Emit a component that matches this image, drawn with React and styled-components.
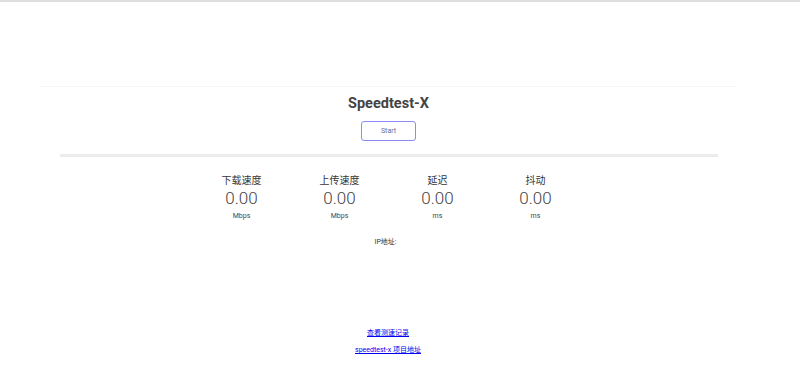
import styled, { createGlobalStyle } from "styled-components"

const Global = createGlobalStyle`
html, body {
margin: 0;
padding: 0;
background: #fff;
font-family: Roboto, "Noto Sans CJK SC", sans-serif;
}
`

const stats = [
  { label: "下载速度", value: "0.00", unit: "Mbps" },
  { label: "上传速度", value: "0.00", unit: "Mbps" },
  { label: "延迟", value: "0.00", unit: "ms" },
  { label: "抖动", value: "0.00", unit: "ms" },
]

export default function App() {
  return (
    <>
      <Global />
      <TopBar />
      <Pagina>
        <Painel>
          <Titulo>Speedtest-X</Titulo>
          <BotaoStart>Start</BotaoStart>
          <Divisor />
          <ListaStats>
            {stats.map((s) => (
              <Stat key={s.label}>
                <StatLabel>{s.label}</StatLabel>
                <StatValor>{s.value}</StatValor>
                <StatUnidade>{s.unit}</StatUnidade>
              </Stat>
            ))}
          </ListaStats>
          <Ip>IP地址:</Ip>
        </Painel>
        <Links>
          <a href="#">查看测速记录</a>
          <a href="#">speedtest-x 项目地址</a>
        </Links>
      </Pagina>
    </>
  )
}

const TopBar = styled.div`
height: 2px;
background-color: #dedede;
`

const Pagina = styled.div`
width: 776px;
display: flex;
flex-direction: column;
align-items: center;
padding-top: 84px;
`

const Painel = styled.div`
box-sizing: border-box;
width: 697px;
margin-left: 1px;
border-top: 1px solid #f6f6f6;
display: flex;
flex-direction: column;
align-items: center;
padding-top: 8px;
`

const Titulo = styled.div`
font-family: Roboto, sans-serif;
font-weight: 700;
font-size: 14.5px;
line-height: 18px;
color: #444;
`

const BotaoStart = styled.button`
width: 55px;
height: 20px;
margin-top: 8px;
border: 1px solid #8b8bf5;
border-radius: 3px;
background: #fff;
font-family: Roboto, sans-serif;
font-size: 7px;
color: #6b6b8f;
padding: 0;
`

const Divisor = styled.div`
width: 658px;
height: 3px;
margin-top: 13px;
background-color: #ececec;
`

const ListaStats = styled.div`
display: flex;
margin-top: 17px;
`

const Stat = styled.div`
width: 98px;
display: flex;
flex-direction: column;
align-items: center;
`

const StatLabel = styled.div`
font-size: 10px;
line-height: 13px;
color: #333;
`

const StatValor = styled.div`
font-size: 17px;
font-weight: 300;
line-height: 20px;
margin-top: 1px;
color: #3f3f3f;
`

const StatUnidade = styled.div`
font-size: 7px;
line-height: 10px;
margin-top: 3px;
color: #4d4640;
`

const Ip = styled.div`
font-size: 7px;
line-height: 10px;
margin-top: 16px;
margin-left: -6px;
color: #333;
`

const Links = styled.div`
display: flex;
flex-direction: column;
align-items: center;
gap: 7px;
margin-top: 81px;
a {
    font-family: Roboto, "Noto Sans CJK SC", sans-serif;
    font-size: 7px;
    line-height: 10px;
    color: #0000ee;
}
`
